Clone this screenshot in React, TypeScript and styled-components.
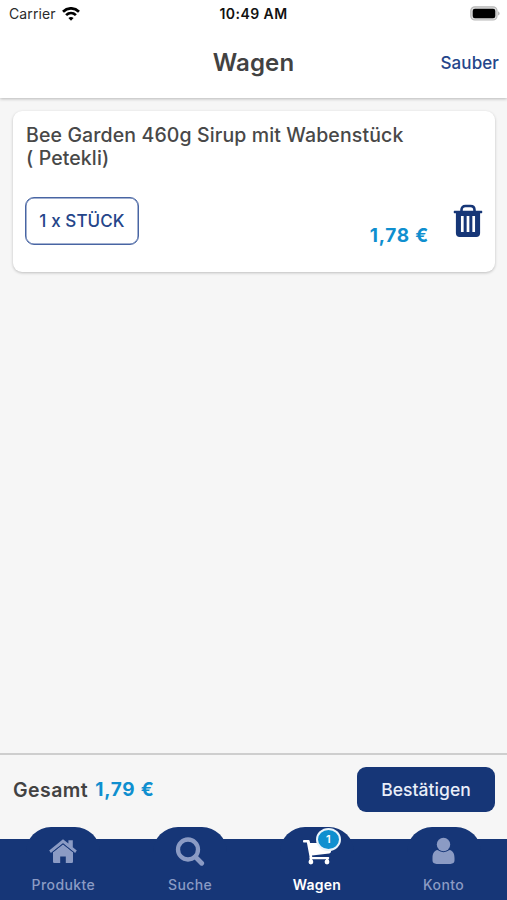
import React from "react";
import styled, { createGlobalStyle } from "styled-components";

const navy = "#163677";
const sky = "#0f8fcf";
const muted = "#8b9bc4";

const GlobalStyle = createGlobalStyle`
  * { box-sizing: border-box; }
  body { margin: 0; background: #f6f6f6; font-family: Inter, "Liberation Sans", sans-serif; }
  button { font: inherit; border: 0; padding: 0; background: none; }
`;

const Screen = styled.div`
  display: flex;
  flex-direction: column;
  width: 507px;
  height: 900px;
  overflow: hidden;
  background: #f6f6f6;
`;

const Top = styled.header`
  height: 98px;
  background: #fff;
  box-shadow: 0 1px 3px rgba(0, 0, 0, 0.25);
`;

const StatusBar = styled.div`
  display: grid;
  grid-template-columns: 1fr auto 1fr;
  align-items: center;
  height: 27px;
  padding: 0 7px;
  color: #111;
  svg { display: block; }
`;

const Carrier = styled.div`
  display: flex;
  align-items: center;
  gap: 6px;
  padding-left: 2px;
  font-size: 14px;
  line-height: 18px;
  letter-spacing: 0.1px;
  color: #2b2b2b;
`;

const Clock = styled.div`
  font-size: 14px;
  font-weight: 600;
  line-height: 18px;
  letter-spacing: 0.45px;
`;

const Battery = styled.div`
  justify-self: end;
`;

const TitleBar = styled.div`
  display: grid;
  grid-template-columns: 1fr auto 1fr;
  align-items: center;
  height: 71px;
  padding: 0 8px;
`;

const Title = styled.h1`
  grid-column: 2;
  margin: 0;
  font-size: 24px;
  line-height: 30px;
  font-weight: 600;
  letter-spacing: 0.15px;
  color: #424242;
`;

const ClearButton = styled.button`
  justify-self: end;
  font-size: 17px;
  font-weight: 500;
  line-height: 22px;
  letter-spacing: 0.1px;
  color: #24458a;
`;

const Content = styled.main`
  flex: 1;
  padding: 13px 12px 0 13px;
`;

const Card = styled.article`
  display: flex;
  flex-direction: column;
  height: 161px;
  padding: 13px 12px 27px;
  border-radius: 9px;
  background: #fff;
  box-shadow: 0 1px 3px rgba(0, 0, 0, 0.23);
`;

const ProductName = styled.h2`
  margin: 0 0 0 1px;
  width: 388px;
  font-size: 19.5px;
  line-height: 23px;
  font-weight: 500;
  letter-spacing: 0.12px;
  color: #484848;
`;

const CardRow = styled.div`
  display: flex;
  align-items: flex-end;
  margin-top: auto;
`;

const Quantity = styled.button`
  width: 114px;
  height: 48px;
  border: 1.5px solid #4865a3;
  box-shadow: inset 0 0 0 0.5px #4865a3;
  border-radius: 9px;
  font-size: 17px;
  font-weight: 500;
  letter-spacing: 0.1px;
  color: #24458a;
`;

const Price = styled.span`
  font-size: 19px;
  font-weight: 700;
  line-height: 24px;
  letter-spacing: 0.75px;
  color: ${sky};
`;

const ItemPrice = styled(Price)`
  margin: 0 0 -3px auto;
`;

const DeleteButton = styled.button`
  align-self: flex-start;
  margin: 7px 0 0 24px;
  svg { display: block; }
`;

const Summary = styled.section`
  display: flex;
  align-items: center;
  gap: 7px;
  height: 74px;
  padding: 0 12px 3px 13px;
  border-top: 2px solid #cecece;
`;

const TotalLabel = styled.span`
  font-size: 19.5px;
  font-weight: 600;
  line-height: 24px;
  letter-spacing: 0.45px;
  color: #424242;
`;

const ConfirmButton = styled.button`
  width: 138px;
  height: 45px;
  margin-left: auto;
  border-radius: 9px;
  background: ${navy};
  color: #e9eef9;
  font-size: 17.5px;
  font-weight: 500;
  letter-spacing: 0.05px;
`;

const TabBar = styled.nav`
  display: grid;
  grid-template-columns: repeat(4, 1fr);
  height: 73px;
  background: linear-gradient(transparent 12px, ${navy} 12px);
`;

const Tab = styled.a<{ $active?: boolean }>`
  display: flex;
  flex-direction: column;
  align-items: center;
  color: ${(p) => (p.$active ? "#fff" : muted)};
  font-size: 14px;
  font-weight: ${(p) => (p.$active ? 600 : 500)};
  line-height: 18px;
  letter-spacing: ${(p) => (p.$active ? "0.2px" : "0.4px")};
`;

const Hump = styled.span`
  position: relative;
  display: flex;
  justify-content: center;
  width: 74px;
  height: 49px;
  padding-top: 10px;
  border-radius: 25px 25px 0 0;
  background: ${navy};
`;

const Badge = styled.span`
  position: absolute;
  top: 1px;
  left: 36px;
  width: 25px;
  height: 23px;
  border: 2px solid #e9f4fb;
  border-radius: 50%;
  background: ${sky};
  color: #fff;
  font-size: 11px;
  font-weight: 600;
  line-height: 19px;
  text-align: center;
  letter-spacing: 0;
`;

const WifiIcon = () => (
  <svg width="18" height="14" viewBox="0 0 18 14" fill="none" stroke="#000" strokeWidth="2.7">
    <path d="M1 4.7C5.6.2 12.4.2 17 4.7" />
    <path d="M4.1 8.1c2.9-2.8 6.9-2.8 9.8 0" />
    <path d="M6.4 11 9 13.8 11.6 11C10 9.5 8 9.5 6.4 11Z" fill="#000" stroke="none" />
  </svg>
);

const BatteryIcon = () => (
  <svg width="30" height="15" viewBox="0 0 30 15">
    <rect x=".8" y=".8" width="26.2" height="13.2" rx="4" fill="#ddd" stroke="#b8b8b8" strokeWidth="1.2" />
    <rect x="2.7" y="2.7" width="22.6" height="9.6" rx="2.2" fill="#000" />
    <path d="M28.2 5.2c1.8.7 1.8 3.7 0 4.4Z" fill="#aaa" />
  </svg>
);

const TrashIcon = () => (
  <svg width="30" height="34" viewBox="0 0 30 34">
    <path d="M8.5 7.5V6c0-2.500 1.400-4 4-4h5c2.600 0 4 1.500 4 4v1.500" fill="none" stroke={navy} strokeWidth="2.6" />
    <path d="M1.8 6.8h26.4c.8 0 1.100.5 1.100 1.200 0 .8-.4 1.300-1.100 1.300h-1.100v20c0 2.300-1.400 3.700-3.700 3.700H6.600c-2.300 0-3.700-1.400-3.700-3.700v-20H1.800C1 9.300.7 8.800.7 8c0-.7.4-1.200 1.100-1.200Z" fill={navy} />
    <path d="M9.3 12v16M15 12v16M20.7 12v16" stroke="#fff" strokeWidth="2.7" />
  </svg>
);

const HomeIcon = () => (
  <svg width="28" height="28" viewBox="0 0 28 28" fill={muted}>
    <path d="m14 7.200 10 8v9.500q0 1.300-1.300 1.300H16.800v-6.600h-5.600V26H5.300Q4 26 4 24.700v-9.500Z" />
    <path d="M14 2.300 19.400 6.600V3.200h4.400v7l4 3.400-1.700 2.300L14 6.200 1.900 15.900.2 13.600Z" />
    <path d="M2.700 15.900 14 6.900l11.300 9" fill="none" stroke={navy} strokeWidth=".8" />
  </svg>
);

const SearchIcon = () => (
  <svg width="30" height="30" viewBox="0 0 30 30" fill="none" stroke={muted}>
    <circle cx="13" cy="12.500" r="10" strokeWidth="4.300" />
    <path d="m20.500 20 6.200 6.200" strokeWidth="4.800" strokeLinecap="round" />
  </svg>
);

const CartIcon = () => (
  <svg width="30" height="28" viewBox="0 0 30 28" fill="#fff">
    <path d="M1 4.200C1 3.300 1.400 3 2 3h4.700c.5 0 .8.300.9.800L8.100 6H29v8.500q0 1.600-1.700 1.900L9.900 18.400l.4 1.700h16c1.300 0 1.300 2.200 0 2.200H9.300c-.8 0-1.300-.3-1.500-1.100L4.900 5.500H2C1.400 5.500 1 5.100 1 4.200Z" />
    <path d="M7.600 20h2.600v5H7.600zM24 21h2.400v4H24z" />
    <circle cx="8.900" cy="25" r="2.400" />
    <circle cx="25" cy="25" r="2.400" />
  </svg>
);

const PersonIcon = () => (
  <svg width="24" height="29" viewBox="0 0 24 29" fill={muted}>
    <circle cx="11.500" cy="7.500" r="6.700" />
    <path d="M5.500 13.100q6 4.300 12 0c3.500.600 5 3.900 5 8v2.500c0 2.400-1.600 3.300-4 3.300h-14c-2.400 0-4-.9-4-3.300v-2.500c0-4.100 1.500-7.400 5-8Z" />
  </svg>
);

const tabs = [
  { label: "Produkte", icon: <HomeIcon /> },
  { label: "Suche", icon: <SearchIcon /> },
  { label: "Wagen", icon: <CartIcon />, badge: 1, active: true },
  { label: "Konto", icon: <PersonIcon /> },
];

export default function App() {
  return (
    <>
      <GlobalStyle />
      <Screen>
        <Top>
          <StatusBar>
            <Carrier>Carrier <WifiIcon /></Carrier>
            <Clock>10:49 AM</Clock>
            <Battery><BatteryIcon /></Battery>
          </StatusBar>
          <TitleBar>
            <Title>Wagen</Title>
            <ClearButton>Sauber</ClearButton>
          </TitleBar>
        </Top>
        <Content>
          <Card>
            <ProductName>Bee Garden 460g Sirup mit Wabenstück<br />( Petekli)</ProductName>
            <CardRow>
              <Quantity>1 x STÜCK</Quantity>
              <ItemPrice>1,78 €</ItemPrice>
              <DeleteButton aria-label="Löschen"><TrashIcon /></DeleteButton>
            </CardRow>
          </Card>
        </Content>
        <Summary>
          <TotalLabel>Gesamt</TotalLabel>
          <Price>1,79 €</Price>
          <ConfirmButton>Bestätigen</ConfirmButton>
        </Summary>
        <TabBar>
          {tabs.map((tab) => (
            <Tab key={tab.label} $active={tab.active}>
              <Hump>
                {tab.icon}
                {tab.badge && <Badge>{tab.badge}</Badge>}
              </Hump>
              {tab.label}
            </Tab>
          ))}
        </TabBar>
      </Screen>
    </>
  );
}
